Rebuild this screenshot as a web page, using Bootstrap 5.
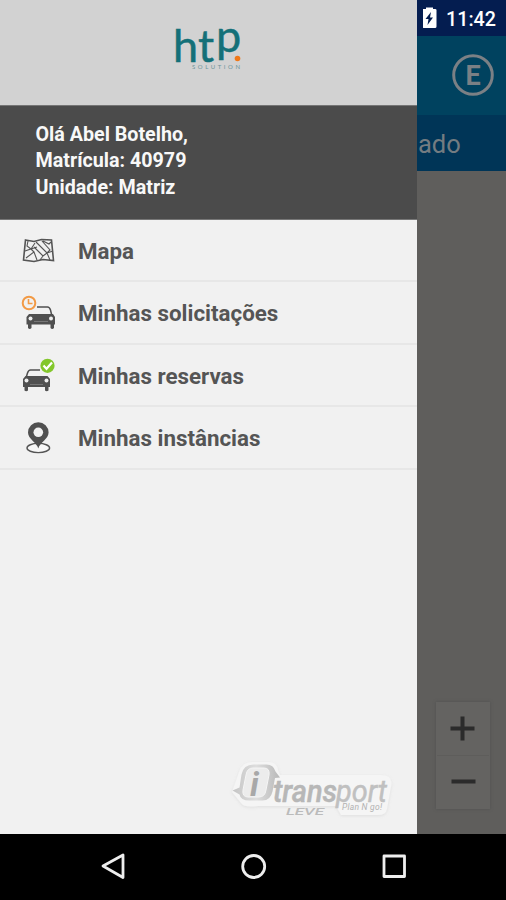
<!DOCTYPE html>
<html lang="pt-BR">
<head>
<meta charset="utf-8">
<meta name="viewport" content="width=device-width, initial-scale=1">
<title>iTransport</title>
<link href="https://cdn.jsdelivr.net/npm/bootstrap@5.3.0/dist/css/bootstrap.min.css" rel="stylesheet">
<style>
body{font-family:Roboto,sans-serif;width:506px;height:900px;overflow:hidden;background:#000}
svg{display:block}
.screen{height:834px}
.drawer{width:417px;background:#f1f1f1}
.brand-area{height:105px;background:#d2d2d2;padding:0 0 0 170px}
.user-area{height:115px;background:#4b4b4b;color:#f8f8f8;padding:15.500px 0 0 35.5px;font-size:19.7px;line-height:26.7px;font-weight:700;border-top:1px solid #757575;border-bottom:1px solid #777}
.menu-row{height:62.6px;background:#f1f1f1;color:#555;font-size:22.35px;font-weight:700;padding:2px 0 0 16px}
.list-group-flush>.menu-row,.list-group-flush>.menu-row:last-child{border:solid #e7e7e7;border-width:0 0 2px}
.menu-row:first-child{height:62px}
.menu-row span{padding-top:1px}
.menu-row svg{width:46px;height:48px;margin-right:16px}
.backdrop-map{background:#5f5e5c}
.status{height:36px;background:#041d50;padding-left:6px;color:#fff}
.appbar{height:79px;background:#00425f;padding:0 0 1px 33px}
.subbar{height:56px;background:#003557;color:#747c81;font-size:25.5px;padding:2px 0 0 1px}
.zoom-box{width:54px;height:107px;background:#646361;margin:0 0 25px 19px;box-shadow:0 0 3px #505050}
.navkeys{height:66px}
</style>
</head>
<body>
<div class="screen d-flex">
  <aside class="drawer d-flex flex-column flex-shrink-0">
    <div class="brand-area">
      <svg width="80" height="76" viewBox="170 0 80 76" role="img" aria-label="htp solution">
        <g fill="#147078" stroke="#147078" stroke-width=".5" font-family="Lato,sans-serif" font-size="45">
          <text x="173" y="61.500">h</text>
          <text x="198" y="61.500">t</text>
          <text x="216" y="51.500">p</text>
        </g>
        <text x="192" y="69.3" font-family="Lato,sans-serif" font-size="6" fill="#6d9499" textLength="48">SOLUTION</text>
        <circle cx="237.5" cy="58.5" r="2.8" fill="#f07818"/>
      </svg>
    </div>
    <div class="user-area"><div><span>Olá Abel Botelho,</span></div><div><span>Matrícula: 40979</span></div><div><span>Unidade: Matriz</span></div></div>
    <nav class="list-group list-group-flush">
      <a class="list-group-item menu-row d-flex align-items-center">
        <svg viewBox="16 226 46 48" fill="none" stroke="#555">
          <path d="M28 240l-1 5 4 3 4-6M25 250l6-2 3 3-8 6M34 251l3 8M31 248l6-2M36 241l11 11 3-3-8-9M34 246l9 9 4-3M43 240l6 3 2-2M47 252l6-2M43 255l-3 4M47 252l3 7" stroke-width="1.100"/>
          <path d="M25.500 239l8.500 1.500 7.500-2 10 .5 2 20.500-10.500-1-9 2-10.500-1.500z" stroke-width="1.600"/>
        </svg><span>Mapa</span></a>
      <a class="list-group-item menu-row d-flex align-items-center">
        <svg viewBox="16 289 46 48">
          <path d="M37 307h10.500q2 0 3 3l1.300 5.500" fill="none" stroke="#505050" stroke-width="1.500"/>
          <path d="M29 314h24l2 3v7.500h-1v3.500q-1.800 2-3.500 0v-3.500h-19v3.500q-1.800 2-3.500 0v-3.500h-1.500V317z" fill="#505050"/>
          <circle cx="30.500" cy="318.500" r="2" fill="#eee"/><circle cx="51" cy="318.500" r="2" fill="#eee"/>
          <path d="M34 321.500h14" stroke="#777"/>
          <circle cx="29" cy="303" r="8.200" fill="#f1f1f1"/><circle cx="29" cy="303" r="6.300" fill="none" stroke="#f29a45" stroke-width="2"/>
          <path d="M28.500 299v4.500h4" fill="none" stroke="#f29a45" stroke-width="1.600"/>
        </svg><span>Minhas solicitações</span></a>
      <a class="list-group-item menu-row d-flex align-items-center">
        <svg viewBox="16 352 46 48">
          <path d="M26 378l1.500-5q1-3 3-3H40" fill="none" stroke="#505050" stroke-width="1.500"/>
          <path d="M25.500 376h22l2.500 3v8h-1.500v3.500q-1.800 1.500-3.500 0V387H28v3.500q-1.800 1.500-3.500 0V387H23v-8z" fill="#505050"/>
          <circle cx="26.500" cy="380.500" r="2" fill="#eee"/><circle cx="46.500" cy="380.500" r="2" fill="#eee"/>
          <path d="M30 384.500h13" stroke="#777"/>
          <circle cx="47.500" cy="365.800" r="8.200" fill="#f1f1f1"/><circle cx="47.500" cy="365.800" r="7.100" fill="#83c72b"/>
          <path d="M43.500 365.500l3 3.300 5.500-6.300" fill="none" stroke="#fff" stroke-width="2.200"/>
        </svg><span>Minhas reservas</span></a>
      <a class="list-group-item menu-row d-flex align-items-center">
        <svg viewBox="16 414 46 48">
          <ellipse cx="38.300" cy="448" rx="11.300" ry="4.600" fill="#f7f7f7" stroke="#555" stroke-width="1.400"/>
          <path d="M38.300 448.500c-1.500-6-10.300-9.500-10.300-16a10.300 10.300 0 0 1 20.600 0c0 6.500-8.800 10-10.300 16z" fill="#505050"/>
          <circle cx="38.300" cy="432.300" r="4.800" fill="#f1f1f1"/>
        </svg><span>Minhas instâncias</span></a>
    </nav>
    <div class="mt-auto">
      <svg width="417" height="84" viewBox="0 750 417 84" role="img" aria-label="iTransport Leve Plan N go!">
        <defs>
          <linearGradient id="silver" x1="0" x2="1"><stop offset="0" stop-color="#c4c4c4"/><stop offset=".5" stop-color="#dedede"/><stop offset="1" stop-color="#b8b8b8"/></linearGradient>
          <filter id="halo" x="-10%" y="-20%" width="120%" height="140%"><feDropShadow dx="0" dy="1" stdDeviation="1.500" flood-color="#999" flood-opacity=".2"/></filter>
        </defs>
        <path d="M239 772q3-10 13-10h17q8 0 9 8l2 5h101q13 0 10 12l-4 22q-1 6-9 6h-37l-5-9h-78q-14 2-17-3l-9-11z" fill="#f5f5f5" filter="url(#halo)"/>
        <path d="M232.500 790.500l7-3 2-13q2-10 12-10h13q7 0 9 7l4.500 6-5 .5-2.500 13.500q-2 9-10 9h-13q-9 0-10-6z" fill="url(#silver)"/>
        <path d="M246 775q1-7 7-7h11q6 0 5 7l-3 15q-1 7-7 7h-11q-6 0-5-7z" fill="#ececec" stroke="#f5f5f5"/>
        <text x="250" y="795.500" font-size="34" font-weight="700" font-style="italic" fill="#a8a8a8" font-family="Roboto,sans-serif">i</text>
        <text x="273" y="802" font-size="31" font-weight="500" font-style="italic" fill="#b7b7b7" stroke="#b7b7b7" stroke-width=".5" font-family="Roboto,sans-serif" textLength="64" lengthAdjust="spacingAndGlyphs">trans</text>
        <text x="336" y="802" font-size="31" font-style="italic" fill="#c0c0c0" stroke="#c0c0c0" stroke-width=".5" font-family="Roboto,sans-serif" textLength="51" lengthAdjust="spacingAndGlyphs">port</text>
        <text x="342" y="810" font-size="8.500" font-style="italic" fill="#b2b2b2" font-family="Roboto,sans-serif" textLength="40">Plan N go!</text>
        <text x="286" y="814.500" font-size="8.500" font-style="italic" font-weight="500" fill="#bbb" font-family="Roboto,sans-serif" textLength="38" lengthAdjust="spacingAndGlyphs">LEVE</text>
      </svg>
    </div>
  </aside>
  <main class="backdrop-map flex-grow-1 d-flex flex-column">
    <div class="status d-flex">
      <svg width="83" height="36" viewBox="423 0 83 36"><path d="M422.500 10q0-1 1-1h2.500V7.500h7V9h2q1.500 0 1.500 1v16.500q0 1.500-1.500 1.500h-11q-1.500 0-1.500-1.500z" fill="#fff"/><path d="M431 12l-5.500 7h3l-1 6 5.500-7.500h-3z" fill="#041d50"/>
      <text x="446" y="26" font-size="20.500" font-weight="500" fill="#fff" font-family="Roboto,sans-serif" textLength="50" lengthAdjust="spacingAndGlyphs">11:42</text></svg>
    </div>
    <div class="appbar d-flex align-items-center"><svg width="46" height="46" viewBox="450 52 46 46"><circle cx="473" cy="75" r="19.300" fill="none" stroke="#7b8085" stroke-width="3"/><text x="473" y="84.500" text-anchor="middle" font-size="27" font-weight="700" fill="#7b8085" font-family="Roboto,sans-serif">E</text></svg></div>
    <div class="subbar d-flex align-items-center"><span>ado</span></div>
    <div class="zoom-box mt-auto"><svg width="54" height="107" viewBox="436 702 54 107"><path d="M450.500 728.500h24M462.500 716.500v24M451.500 781.500h24" stroke="#2b2b2b" stroke-width="4"/><path d="M437 755.500h52" stroke="#5e5d5b"/></svg></div>
  </main>
</div>
<footer class="navkeys bg-black">
  <svg width="506" height="66" viewBox="0 834 506 66" fill="none" stroke="#eee" stroke-width="2.800" stroke-linejoin="round"><path d="M123 855v22.500l-20-11.500z"/><circle cx="253.700" cy="866.500" r="11"/><rect x="384" y="856" width="20.500" height="20.500"/></svg>
</footer>
<script src="https://cdn.jsdelivr.net/npm/bootstrap@5.3.0/dist/js/bootstrap.bundle.min.js"></script>
</body>
</html>
